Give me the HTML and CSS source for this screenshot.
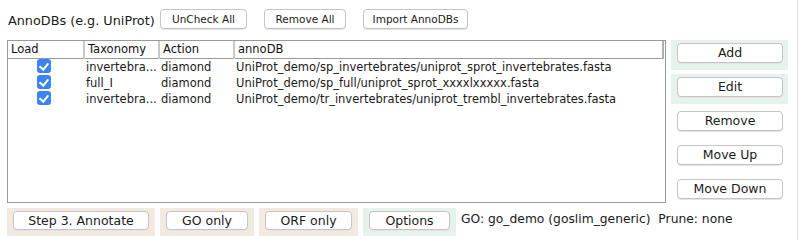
FILE: index.html
```html
<!DOCTYPE html>
<html lang="en">
    <head>
        <meta charset="utf-8" />
        <title>AnnoDBs</title>
        <link rel="stylesheet" href="styles.css">
    </head>
    <body>
        <div class="frame">
            <header class="toprow">
                <span class="title">AnnoDBs (e.g. UniProt)</span>
                <button class="btn small w86">UnCheck All</button>
                <button class="btn small w81">Remove All</button>
                <button class="btn small w105">Import AnnoDBs</button>
            </header>

            <div class="main">
                <div class="tablebox">
                    <table>
                        <thead>
                            <tr><th class="c1">Load</th><th class="c2">Taxonomy</th><th class="c3">Action</th><th class="c4">annoDB</th></tr>
                        </thead>
                        <tbody>
                            <tr><td class="chk"><span class="box"></span></td><td>invertebra...</td><td>diamond</td><td>UniProt_demo/sp_invertebrates/uniprot_sprot_invertebrates.fasta</td></tr>
                            <tr><td class="chk"><span class="box"></span></td><td>full_I</td><td>diamond</td><td>UniProt_demo/sp_full/uniprot_sprot_xxxxlxxxxx.fasta</td></tr>
                            <tr><td class="chk"><span class="box"></span></td><td>invertebra...</td><td>diamond</td><td>UniProt_demo/tr_invertebrates/uniprot_trembl_invertebrates.fasta</td></tr>
                        </tbody>
                    </table>
                </div>
                <aside class="side">
                    <div class="slot green"><button class="btn">Add</button></div>
                    <div class="slot green"><button class="btn">Edit</button></div>
                    <div class="slot"><button class="btn">Remove</button></div>
                    <div class="slot"><button class="btn">Move Up</button></div>
                    <div class="slot"><button class="btn">Move Down</button></div>
                </aside>
            </div>

            <footer class="bottom">
                <div class="panel beige p148"><button class="btn">Step 3. Annotate</button></div>
                <div class="panel beige p94"><button class="btn">GO only</button></div>
                <div class="panel beige p99"><button class="btn">ORF only</button></div>
                <div class="panel green p93"><button class="btn">Options</button></div>
                <span class="info">GO: go_demo (goslim_generic)&nbsp; Prune: none</span>
            </footer>
        </div>
    </body>
</html>
```

FILE: styles.css
```css
* { margin: 0; padding: 0; box-sizing: border-box; }
body {
    font-family: "DejaVu Sans", "Liberation Sans", sans-serif;
    font-size: 12px;
    color: #1a1a1a;
    background: #fff;
    width: 799px;
    height: 240px;
    overflow: hidden;
}
.frame {
    width: 798px;
    height: 240px;
    border-right: 1px solid #e2e2e2;
    padding: 9px 0 0 7px;
}

.btn {
    font-family: inherit;
    font-size: 12px;
    color: #1a1a1a;
    background: #fff;
    border: 1px solid #c4c4c4;
    border-radius: 4px;
    box-shadow: 0 1px 0 #e4e4e4;
    height: 20px;
    line-height: 18px;
    display: block;
}
.btn.small { font-size: 10.5px; }

/* top row */
.toprow { display: flex; align-items: center; height: 20px; }
.title { font-size: 12.8px; width: 153px; padding-left: 1px; padding-top: 3px; }
.toprow .btn { margin-right: 17px; }
.w86 { width: 87px; }
.w81 { width: 82px; }
.w105 { width: 105px; }

/* table + side buttons */
.main { display: flex; margin-top: 11px; }
.tablebox {
    width: 659px;
    height: 163px;
    border: 1px solid #9a9a9a;
    background: #fff;
}
table { border-collapse: collapse; table-layout: fixed; width: 656px; }
th {
    text-align: left;
    font-weight: normal;
    font-size: 11.5px;
    height: 17px;
    padding: 0 4px 0 3px;
    border-bottom: 1px solid #9a9a9a;
    border-right: 2px solid #c8c8c8;
    color: #111;
}
th.c4 { border-right: 2px solid #b0b0b0; }
.c1 { width: 76px; }
.c2 { width: 75px; }
.c3 { width: 75px; }
td {
    height: 16px;
    padding: 0 0 0 2px;
    white-space: nowrap;
    overflow: hidden;
    font-size: 11.5px;
    line-height: 16px;
}
td.chk { text-align: center; padding: 0 4px 0 0; overflow: visible; }
.box {
    display: inline-block;
    width: 14px;
    height: 14px;
    border-radius: 3px;
    background: #3a84f5;
    vertical-align: middle;
    position: relative;
    top: -1px;
}
.box::after {
    content: "";
    position: absolute;
    left: 4px;
    top: 2px;
    width: 4px;
    height: 7px;
    border: solid #fff;
    border-width: 0 2px 2px 0;
    transform: rotate(40deg);
}

.side { margin-left: 5px; width: 117px; display: flex; flex-direction: column; gap: 4px; }
.slot { height: 30px; padding: 3px 5px 0 6px; }
.slot .btn { width: 106px; font-size: 12.5px; }
.green { background: #e6f3ec; }
.beige { background: #f2e9e1; }

/* bottom row */
.bottom { display: flex; align-items: flex-start; margin-top: 2px; gap: 5px; height: 28px; }
.panel { height: 28px; padding: 3px 6px 0 6px; }
.panel .btn { width: 100%; height: 19px; line-height: 17px; font-size: 12.5px; }
.p148 { width: 148px; }
.p94 { width: 94px; }
.p99 { width: 99px; }
.p93 { width: 93px; }
.info { font-size: 12.3px; padding-top: 4px; }

.frame::after {
    content: "";
    display: block;
    width: 780px;
    margin-top: 4px;
    border-top: 1px solid #d8d8d8;
}
```
